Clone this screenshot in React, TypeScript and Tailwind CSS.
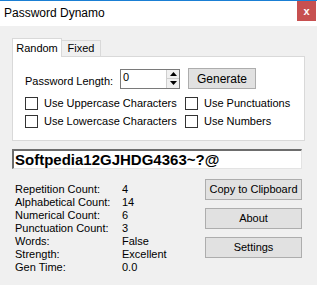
import React from "react";

const font = { fontFamily: '"Liberation Sans", Arial, sans-serif' };

function Check({ label }: { label: string }) {
  return (
    <div className="flex items-center gap-[6px] h-[13px]">
      <div className="w-[13px] h-[13px] border border-[#333333] bg-white shrink-0" />
      <span className="text-[11px] leading-none text-black">{label}</span>
    </div>
  );
}

function WinButton({ label, className = "" }: { label: string; className?: string }) {
  return (
    <div
      className={`flex items-center justify-center bg-[#e1e1e1] border border-[#adadad] text-[11px] text-black ${className}`}
    >
      {label}
    </div>
  );
}

const stats: [string, string][] = [
  ["Repetition Count:", "4"],
  ["Alphabetical Count:", "14"],
  ["Numerical Count:", "6"],
  ["Punctuation Count:", "3"],
  ["Words:", "False"],
  ["Strength:", "Excellent"],
  ["Gen Time:", "0.0"],
];

export default function App() {
  return (
    <div className="w-[317px] h-[285px] bg-[#f0f0f0] flex flex-col overflow-hidden" style={font}>
      {/* Title bar */}
      <div className="h-[26px] bg-white border-t border-[#1a7fd4] flex items-start justify-between shrink-0">
        <span className="ml-[4px] mt-[5px] text-[12px] leading-[14px] text-black">Password Dynamo</span>
        <div className="w-[19px] h-[20px] mr-[1px] bg-[#c75050] flex items-center justify-center text-white text-[11px] font-bold">
          x
        </div>
      </div>

      <div className="flex flex-col px-[12px] pt-[12px]">
        {/* Tabs */}
        <div className="flex items-end h-[18px]">
          <div className="w-[50px] h-[19px] bg-white border border-b-0 border-[#d9d9d9] flex items-center justify-center text-[11px] text-black relative top-[1px] z-10">
            Random
          </div>
          <div className="w-[39px] h-[16px] bg-[#f0f0f0] border border-l-0 border-b-0 border-[#d9d9d9] flex items-center justify-center text-[11px] text-black">
            Fixed
          </div>
        </div>

        {/* Tab page */}
        <div className="w-[293px] h-[85px] bg-white border border-[#d9d9d9] pl-[12px] pt-[11px] flex flex-col">
          <div className="flex items-center h-[21px]">
            <span className="text-[11px] text-black w-[95px] mt-[6px]">Password Length:</span>
            <div className="w-[60px] h-[20px] border border-[#7a7a7a] bg-white flex">
              <span className="flex-1 text-[11px] text-black pl-[2px] leading-[14px]">0</span>
              <div className="w-[13px] flex flex-col border-l border-[#cfcfcf] bg-[#f0f0f0]">
                <div className="flex-1 flex items-center justify-center border-b border-[#cfcfcf]">
                  <svg width="7" height="4" viewBox="0 0 7 4">
                    <path d="M3.5 0L7 4H0z" fill="#000" />
                  </svg>
                </div>
                <div className="flex-1 flex items-center justify-center">
                  <svg width="7" height="4" viewBox="0 0 7 4">
                    <path d="M0 0h7L3.5 4z" fill="#000" />
                  </svg>
                </div>
              </div>
            </div>
            <WinButton label="Generate" className="ml-[8px] w-[68px] h-[21px] text-[12px]" />
          </div>
          <div className="flex mt-[8px]">
            <div className="flex flex-col gap-[5px] w-[160px]">
              <Check label="Use Uppercase Characters" />
              <Check label="Use Lowercase Characters" />
            </div>
            <div className="flex flex-col gap-[5px]">
              <Check label="Use Punctuations" />
              <Check label="Use Numbers" />
            </div>
          </div>
        </div>

        {/* Password field */}
        <div className="mt-[8px] w-[290px] h-[20px] bg-white border-t-2 border-l-2 border-t-[#6d6d6d] border-l-[#6d6d6d] border-b border-r border-b-[#e3e3e3] border-r-[#e3e3e3] flex items-center pl-[1px]">
          <span className="text-[15px] font-bold text-black leading-none">Softpedia12GJHDG4363~?@</span>
        </div>

        {/* Stats + buttons */}
        <div className="flex mt-[12px]">
          <div className="flex flex-col pl-[3px] pt-[2px] w-[193px]">
            {stats.map(([k, v]) => (
              <div key={k} className="flex h-[13px] items-center text-[11px] text-black">
                <span className="w-[107px]">{k}</span>
                <span>{v}</span>
              </div>
            ))}
          </div>
          <div className="flex flex-col gap-[8px] -mt-[2px]">
            <WinButton label="Copy to Clipboard" className="w-[97px] h-[21px]" />
            <WinButton label="About" className="w-[97px] h-[21px]" />
            <WinButton label="Settings" className="w-[97px] h-[21px]" />
          </div>
        </div>
      </div>
    </div>
  );
}
